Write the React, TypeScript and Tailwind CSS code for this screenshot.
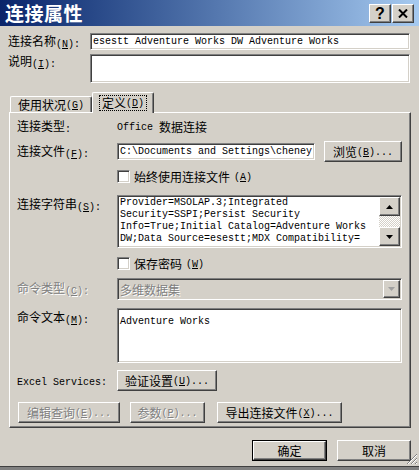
import React from 'react';

const sunken =
  'border border-t-[#808080] border-l-[#808080] border-b-white border-r-white shadow-[inset_1px_1px_0_#404040,inset_-1px_-1px_0_#d4d0c8]';
const raised =
  'border border-t-white border-l-white border-b-[#404040] border-r-[#404040] shadow-[inset_-1px_-1px_0_#808080]';
const dim = 'text-[#808080] [text-shadow:1px_1px_0_#ffffff]';

const isCJK = (ch: string) => /[\u2e80-\u9fff\uff00-\uffef]/.test(ch);

// "&X" marks the underlined access key
const accel = (text: string) => {
  const parts = text.split('&');
  return parts.map((p, i) =>
    i === 0 ? (
      <React.Fragment key={i}>{p}</React.Fragment>
    ) : (
      <React.Fragment key={i}>
        <span className="underline underline-offset-[1px]">{p.charAt(0)}</span>
        {p.slice(1)}
      </React.Fragment>
    )
  );
};

// SimSun look: CJK at 12px, latin as 6px-wide mono
const Txt = ({ s }: { s: string }) => {
  const runs: { cjk: boolean; text: string }[] = [];
  for (const ch of s) {
    const c = isCJK(ch);
    const last = runs[runs.length - 1];
    if (last && last.cjk === c) last.text += ch;
    else runs.push({ cjk: c, text: ch });
  }
  const mixed = runs.length > 1;
  return (
    <>
      {runs.map((r, i) =>
        r.cjk ? (
          <span key={i} className="font-['Noto_Sans_CJK_SC',sans-serif] text-[12px]">
            {r.text}
          </span>
        ) : (
          <span
            key={i}
            className={`font-['Liberation_Mono',monospace] text-[10px] whitespace-pre ${mixed ? 'relative top-[1px]' : ''}`}
          >
            {accel(r.text)}
          </span>
        )
      )}
    </>
  );
};

const Button = ({
  s,
  w,
  disabled,
  isDefault,
}: {
  s: string;
  w: string;
  disabled?: boolean;
  isDefault?: boolean;
}) => (
  <div className={`${w} h-[21px] ${isDefault ? 'border border-black' : ''}`}>
    <div
      className={`w-full h-full ${raised} flex items-center justify-center ${disabled ? dim : ''}`}
    >
      <Txt s={s} />
    </div>
  </div>
);

const CheckBox = ({ s }: { s: string }) => (
  <div className="flex items-center h-[15px] gap-[4px]">
    <div className={`w-[13px] h-[13px] bg-white ${sunken}`} />
    <Txt s={s} />
  </div>
);

const Arrow = ({ up, color = '#000000' }: { up?: boolean; color?: string }) => (
  <svg width="7" height="4" viewBox="0 0 7 4">
    <polygon points={up ? '3.5,0 7,4 0,4' : '0,0 7,0 3.5,4'} fill={color} />
  </svg>
);

const Label = ({ s, className = '' }: { s: string; className?: string }) => (
  <div className={`w-[100px] shrink-0 ${className}`}>
    <Txt s={s} />
  </div>
);

export default function App() {
  return (
    <div className="w-[419px] h-[470px] bg-[#808080] overflow-hidden">
      <div className="relative h-[467px] bg-[#d4d0c8] border-b border-b-[#404040] flex flex-col leading-[14px] text-black">
        {/* title bar */}
        <div className="h-[26px] shrink-0 bg-linear-to-r from-[#0a246a] to-[#a6caf0] flex items-center pl-[5px] pr-[5px]">
          <span className="font-['Noto_Sans_CJK_SC',sans-serif] font-bold text-[19px] leading-[24px] text-white tracking-[0.5px]">
            连接属性
          </span>
          <div className="ml-auto flex gap-[1px] mt-[1px]">
            <div
              className={`w-[22px] h-[19px] bg-[#d4d0c8] ${raised} flex items-center justify-center font-['Liberation_Sans',sans-serif] font-bold text-[16px] leading-none`}
            >
              ?
            </div>
            <div className={`w-[22px] h-[19px] bg-[#d4d0c8] ${raised} flex items-center justify-center`}>
              <svg width="10" height="9" viewBox="0 0 10 9">
                <path d="M1 0.5 L9 8.5 M9 0.5 L1 8.5" stroke="#000" strokeWidth="2" />
              </svg>
            </div>
          </div>
        </div>

        {/* name / description */}
        <div className="ml-[8px] mt-[7px] flex items-center h-[17px]">
          <div className="w-[82px]">
            <Txt s="连接名称(&N):" />
          </div>
          <div className={`w-[320px] h-[17px] bg-white pl-[2px] ${sunken} flex items-center`}>
            <Txt s="esestt Adventure Works DW Adventure Works" />
          </div>
        </div>
        <div className="ml-[8px] mt-[4px] flex items-start h-[29px]">
          <div className="w-[82px] -mt-[1px]">
            <Txt s="说明(&I):" />
          </div>
          <div className={`w-[320px] h-[29px] bg-white ${sunken}`} />
        </div>

        {/* tabs */}
        <div className="ml-[10px] mt-[9px] h-[20px] flex items-end">
          <div className="w-[82px] h-[16px] border border-b-0 border-t-white border-l-white border-r-[#404040] rounded-t-[2px] shadow-[inset_-1px_0_0_#808080] flex items-center justify-center pt-[1px]">
            <Txt s="使用状况(&G)" />
          </div>
          <div className="relative z-10 w-[62px] h-[21px] -mb-[1px] bg-[#d4d0c8] border border-b-0 border-t-white border-l-white border-r-[#404040] rounded-t-[2px] shadow-[inset_-1px_0_0_#808080] flex items-start justify-center pt-[2px]">
            <div className="border border-dotted border-black px-[2px] h-[16px] flex items-center">
              <Txt s="定义(&D)" />
            </div>
          </div>
        </div>

        {/* panel */}
        <div
          className={`relative z-0 ml-[9px] w-[402px] h-[316px] border border-t-white border-l-white border-b-[#404040] border-r-[#404040] shadow-[inset_-1px_-1px_0_#808080] pl-[7px] flex flex-col`}
        >
          <div className="mt-[7px] h-[14px] flex items-center">
            <Label s="连接类型:" />
            <Txt s="Office 数据连接" />
          </div>

          <div className="mt-[7px] h-[21px] flex items-center">
            <Label s="连接文件(&F):" />
            <div className={`w-[198px] h-[17px] bg-white pl-[2px] ${sunken} flex items-center overflow-hidden`}>
              <Txt s="C:\Documents and Settings\cheney" />
            </div>
            <div className="ml-[9px]">
              <Button s="浏览(&B)..." w="w-[78px]" />
            </div>
          </div>

          <div className="mt-[7px] h-[15px] flex items-center">
            <div className="w-[100px]" />
            <CheckBox s="始终使用连接文件(&A)" />
          </div>

          <div className="mt-[11px] h-[53px] flex items-start">
            <Label s="连接字符串(&S):" className="pt-[1px]" />
            <div className={`w-[285px] h-[53px] bg-white ${sunken} flex`}>
              <div className="flex-1 pl-[2px] pt-[1px] font-['Liberation_Mono',monospace] text-[10px] leading-[12px] whitespace-pre overflow-hidden">
                <div>Provider=MSOLAP.3;Integrated</div>
                <div>Security=SSPI;Persist Security</div>
                <div>Info=True;Initial Catalog=Adventure Works</div>
                <div>DW;Data Source=esestt;MDX Compatibility=</div>
              </div>
              <div className="w-[21px] flex flex-col py-[1px] mr-[1px]">
                <div className={`h-[19px] bg-[#d4d0c8] ${raised} flex items-center justify-center`}>
                  <Arrow up />
                </div>
                <div className="flex-1 bg-[image:repeating-conic-gradient(#ffffff_0_25%,#d4d0c8_0_50%)] bg-[size:2px_2px]" />
                <div className={`h-[19px] bg-[#d4d0c8] ${raised} flex items-center justify-center`}>
                  <Arrow />
                </div>
              </div>
            </div>
          </div>

          <div className="mt-[8px] h-[15px] flex items-center">
            <div className="w-[100px]" />
            <CheckBox s="保存密码(&W)" />
          </div>

          <div className="mt-[7px] h-[22px] flex items-center">
            <Label s="命令类型(&C):" className={dim} />
            <div className={`w-[285px] h-[22px] bg-[#d4d0c8] ${sunken} flex items-center pl-[2px]`}>
              <div className={`flex-1 ${dim}`}>
                <Txt s="多维数据集" />
              </div>
              <div className={`w-[17px] h-[18px] mr-[1px] bg-[#d4d0c8] ${raised} flex items-center justify-center`}>
                <Arrow color="#a0a0a0" />
              </div>
            </div>
          </div>

          <div className="mt-[8px] h-[55px] flex items-start">
            <Label s="命令文本(&M):" className="pt-[1px]" />
            <div className={`w-[285px] h-[55px] bg-white ${sunken} pl-[2px] pt-[2px]`}>
              <Txt s="Adventure Works" />
            </div>
          </div>

          <div className="mt-[7px] h-[21px] flex items-center">
            <Label s="Excel Services:" />
            <Button s="验证设置(&U)..." w="w-[100px]" />
          </div>

          <div className="mt-[11px] h-[21px] flex items-center ml-[1px]">
            <Button s="编辑查询(&E)..." w="w-[102px]" disabled />
            <div className="ml-[10px]">
              <Button s="参数(&P)..." w="w-[75px]" disabled />
            </div>
            <div className="ml-[12px]">
              <Button s="导出连接文件(&X)..." w="w-[125px]" />
            </div>
          </div>
        </div>

        {/* OK / Cancel */}
        <div className="mt-[12px] h-[21px] flex justify-end gap-[10px] pr-[8px]">
          <Button s="确定" w="w-[75px]" isDefault />
          <Button s="取消" w="w-[74px]" />
        </div>

        {/* size grip */}
        <svg className="absolute right-[1px] bottom-[1px]" width="12" height="12" viewBox="0 0 12 12">
          <path d="M11 1 L1 11 M11 5 L5 11 M11 9 L9 11" stroke="#808080" strokeWidth="1" />
          <path d="M11 2 L2 11 M11 6 L6 11 M11 10 L10 11" stroke="#ffffff" strokeWidth="1" />
        </svg>
      </div>
    </div>
  );
}
